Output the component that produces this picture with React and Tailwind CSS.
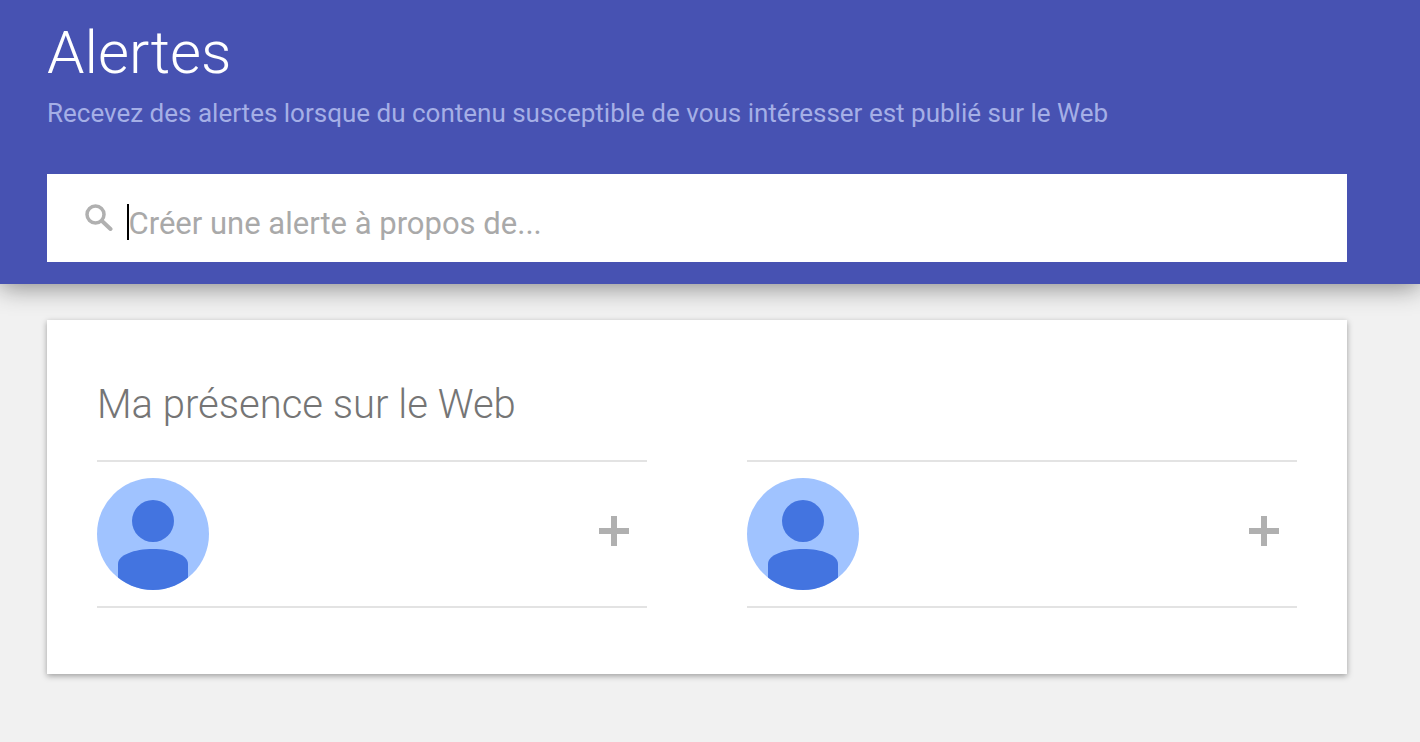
const font = { fontFamily: 'Roboto, sans-serif' };

function Avatar() {
  return (
    <svg width="112" height="112" viewBox="0 0 112 112" className="shrink-0">
      <defs>
        <clipPath id="avatar-clip">
          <circle cx="56" cy="56" r="56" />
        </clipPath>
      </defs>
      <circle cx="56" cy="56" r="56" fill="#a0c3ff" />
      <circle cx="56" cy="43" r="21" fill="#4374e0" />
      <path
        d="M21 86C21 77 37 71 56 71C75 71 91 77 91 86V112H21Z"
        fill="#4374e0"
        clipPath="url(#avatar-clip)"
      />
    </svg>
  );
}

function PresenceRow() {
  return (
    <div className="flex h-[148px] w-[550px] items-center justify-between border-y-2 border-[#e3e3e3] pr-[17px]">
      <Avatar />
      <svg width="32" height="32" viewBox="0 0 32 32" className="mt-[-6px] blur-[0.5px]">
        <path d="M13 1h6v12h12v6H19v12h-6V19H1v-6h12Z" fill="#b0b0b0" />
      </svg>
    </div>
  );
}

export default function App() {
  return (
    <div className="h-[742px] overflow-hidden bg-[#f1f1f1]" style={font}>
      <header className="h-[284px] bg-[#4752b2] px-[47px] shadow-[0_3px_24px_rgba(0,0,0,0.45)]">
        <h1 className="pt-[18px] text-[60px] leading-[70px] font-light text-white">Alertes</h1>
        <p className="mt-[7px] text-[26px] leading-[36px] text-[#a5afe6]">
          Recevez des alertes lorsque du contenu susceptible de vous intéresser est publié sur le Web
        </p>
        <div className="mt-[43px] flex h-[88px] w-[1300px] items-center bg-white pl-[36px]">
          <svg width="32" height="32" viewBox="0 0 32 32" className="mt-[-1px] shrink-0 blur-[0.5px]">
            <circle cx="12.5" cy="12.5" r="8.5" fill="none" stroke="#b0b0b0" strokeWidth="3.5" />
            <path d="M19 19l8.5 8" stroke="#b0b0b0" strokeWidth="4" strokeLinecap="round" />
          </svg>
          <div className="ml-[12px] h-[36px] w-[1.5px] translate-y-[4px] bg-black" />
          <span className="translate-y-[6px] text-[31px] leading-[36px] text-[#a9a9a9]">Créer une alerte à propos de...</span>
        </div>
      </header>

      <main className="ml-[47px] mt-[36px] h-[354px] w-[1300px] bg-white px-[50px] pt-[56px] shadow-[0_2px_6px_rgba(0,0,0,0.35)]">
        <h2 className="text-[40px] leading-[58px] font-light text-[#757575]">Ma présence sur le Web</h2>
        <div className="mt-[26px] flex gap-[100px]">
          <PresenceRow />
          <PresenceRow />
        </div>
      </main>
    </div>
  );
}
